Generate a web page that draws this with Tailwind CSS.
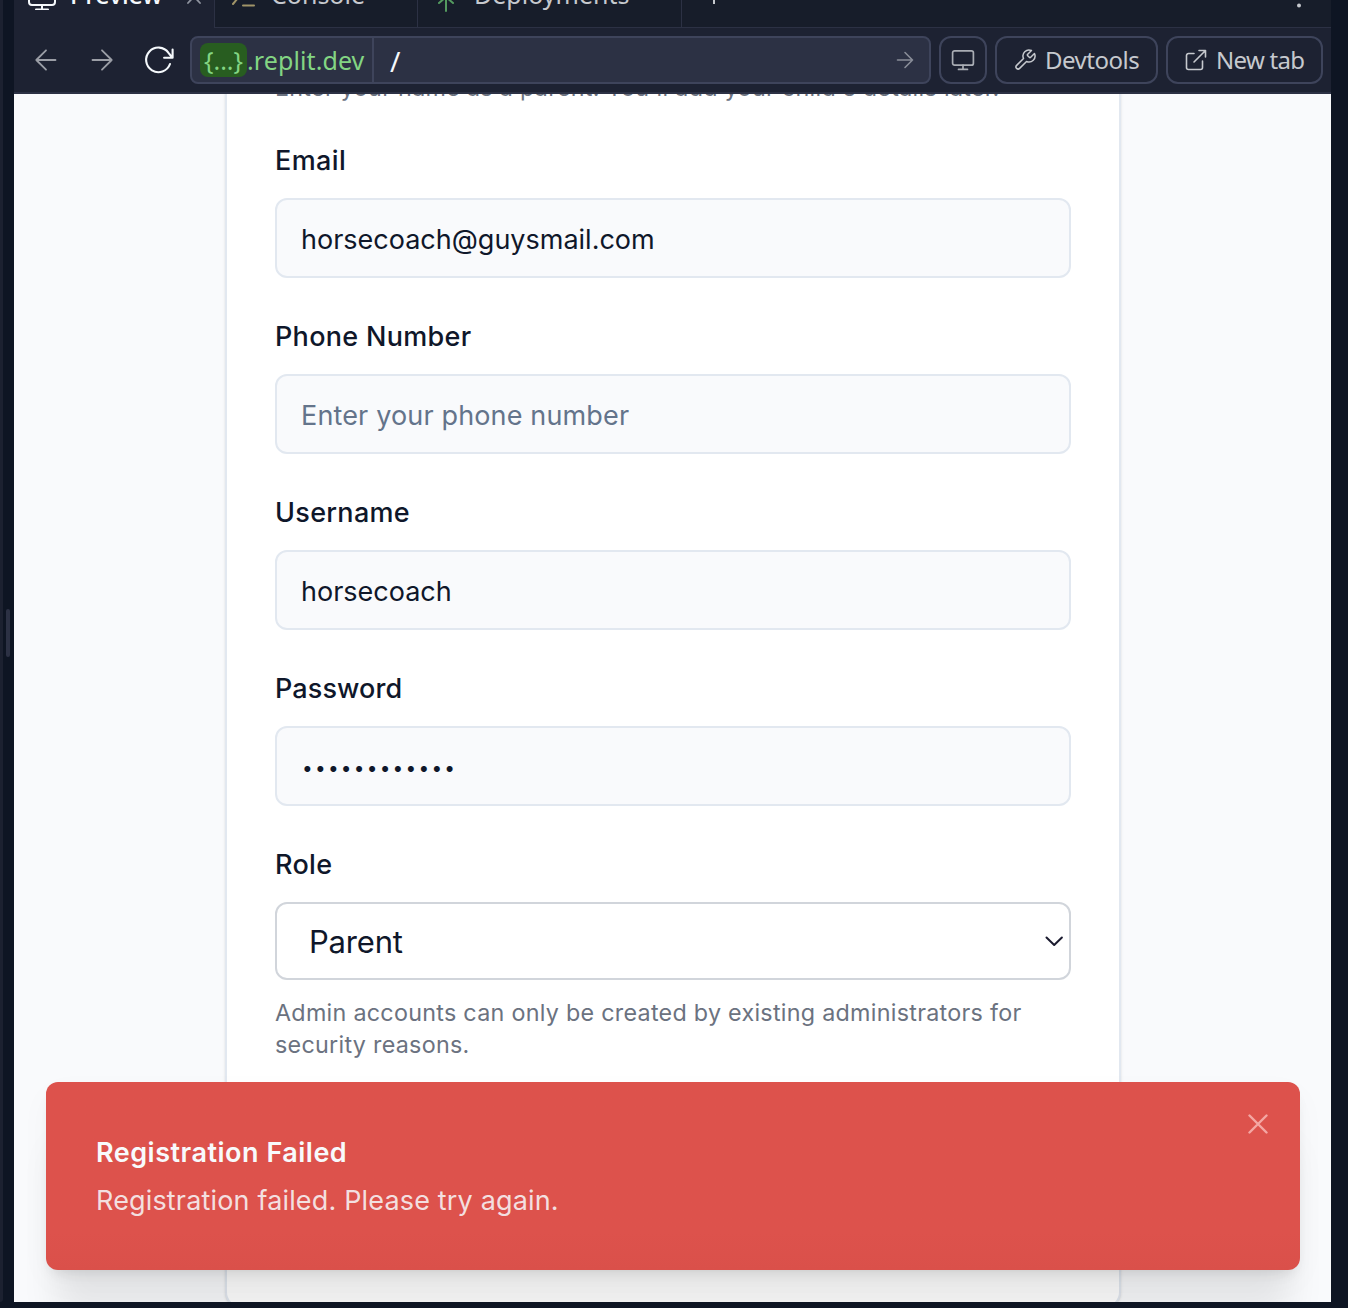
<!DOCTYPE html>
<html lang="en">
<head>
<meta charset="utf-8">
<title>Preview</title>
<script src="https://cdn.jsdelivr.net/npm/@tailwindcss/browser@4"></script>
</head>
<body class="h-[1308px] w-[1348px] overflow-hidden bg-[#0e1523] font-['Inter',sans-serif]">
<div class="flex h-full">
  <div class="h-[1302px] w-[3px] shrink-0 rounded-br-sm bg-[#1c2130]"></div>
  <div class="flex w-[11px] shrink-0 items-start pt-[609px] pl-[3px]">
    <div class="h-12 w-1 rounded-full bg-[#2c3144]"></div>
  </div>

  <main class="flex h-[1302px] w-[1317px] shrink-0 flex-col overflow-hidden bg-[#1d2232]">
    <!-- Tabs -->
    <div class="flex h-7 shrink-0 items-end text-[25px] leading-8 text-[#c6c9ce] font-['Noto_Sans',sans-serif]">
      <div class="flex h-12 w-[200px] shrink-0 items-start pl-3.5 text-[#f5f9fc]">
        <svg class="mt-0.5 h-7 w-7 shrink-0" viewBox="0 0 28 28" fill="none" stroke="currentColor" stroke-width="2" stroke-linecap="round"><rect x="1" y="4" width="26" height="19" rx="3"/><path d="M14 23v4.500M8 27.500h12"/></svg>
        <span class="-mt-0.5 ml-3.5 font-medium tracking-[-0.1px] whitespace-nowrap">Preview</span>
        <svg class="mt-2 ml-6 h-4 w-4 shrink-0 text-[#8f949f]" viewBox="0 0 16 16" fill="none" stroke="currentColor" stroke-width="1.800" stroke-linecap="round"><path d="M2 2l12 13M14 2L2 15"/></svg>
      </div>
      <div class="flex h-12 w-[204px] shrink-0 items-start border-x border-b border-[#2c3144] bg-[#171d2a] pl-4">
        <svg class="mt-1 h-6 w-7 shrink-0 text-[#a09468]" viewBox="0 0 28 24" fill="none" stroke="currentColor" stroke-width="2" stroke-linecap="round"><path d="M2 3l7 8.500L2 20M12 21.500h11"/></svg>
        <span class="-mt-0.5 ml-3 whitespace-nowrap">Console</span>
      </div>
      <div class="flex h-12 w-[264px] shrink-0 items-start border-r border-b border-[#2c3144] bg-[#171d2a] pl-4">
        <svg class="mt-1 h-7 w-6 shrink-0 text-[#549a5f]" viewBox="0 0 24 28" fill="none" stroke="currentColor" stroke-width="2" stroke-linecap="round"><path d="M12 12v15M5 19l7-6 7 6"/></svg>
        <span class="-mt-0.5 ml-4 whitespace-nowrap">Deployments</span>
      </div>
      <div class="flex h-12 flex-1 items-start justify-between border-b border-[#2c3144] bg-[#171d2a] pr-[30px] pl-[22px]">
        <svg class="mt-1 h-5 w-5" viewBox="0 0 20 20" fill="none" stroke="currentColor" stroke-width="2" stroke-linecap="round"><path d="M10 1v19M1 10h18"/></svg>
        <svg class="mt-1 h-6 w-1 shrink-0" viewBox="0 0 4 24" fill="currentColor"><circle cx="2" cy="4" r="2"/><circle cx="2" cy="13" r="2"/><circle cx="2" cy="21.500" r="2"/></svg>
      </div>
    </div>

    <!-- Browser toolbar -->
    <div class="flex h-[66px] shrink-0 items-start border-b-2 border-[#2c3144] pt-2 pl-5 text-[25px] font-['Noto_Sans',sans-serif]">
      <svg class="mt-3 h-6 w-6 text-[#9b9ea6]" viewBox="0 0 24 24" fill="none" stroke="currentColor" stroke-width="1.800" stroke-linecap="round" stroke-linejoin="round"><path d="M21.500 12H2.300M12 2.300L2.300 12l9.700 9.700"/></svg>
      <svg class="mt-3 ml-8 h-6 w-6 text-[#9b9ea6]" viewBox="0 0 24 24" fill="none" stroke="currentColor" stroke-width="1.800" stroke-linecap="round" stroke-linejoin="round"><path d="M2.500 12h19.200M12 2.300l9.700 9.700-9.700 9.700"/></svg>
      <svg class="mt-2 ml-[29px] h-8 w-8 text-[#f5f9fc]" viewBox="0 0 32 32" fill="none" stroke="currentColor" stroke-width="2.100" stroke-linecap="round" stroke-linejoin="round"><path d="M29.600 5.500v8.300h-8.500M29.200 13.500L25.500 8.800A12.300 12.300 0 1 0 27 20"/></svg>
      <div class="ml-[15px] flex h-12 w-[741px] items-center rounded-lg border-2 border-[#3e445b] bg-[#2c3144]">
        <div class="flex h-full w-[182px] items-center border-r-2 border-[#3e445b] pl-2 text-[#83d583]">
          <span class="flex h-[34px] w-[47px] items-center justify-center rounded-lg bg-[#285d20] pt-0.5">{...}</span>
          <span class="pt-0.5 tracking-[0.1px] whitespace-nowrap">.replit.dev</span>
        </div>
        <span class="ml-4 pt-0.5 text-[28px] text-[#f5f9fc]">/</span>
        <svg class="mr-[15px] ml-auto h-[18px] w-[18px] text-[#898d98]" viewBox="0 0 18 18" fill="none" stroke="currentColor" stroke-width="1.600" stroke-linecap="round" stroke-linejoin="round"><path d="M1.500 9h15M9 1.500L16.500 9 9 16.500"/></svg>
      </div>
      <div class="ml-2 flex h-12 w-12 items-center justify-center rounded-xl border-2 border-[#3e445b] text-[#a9adb4]">
        <svg class="h-6 w-6" viewBox="0 0 24 24" fill="none" stroke="currentColor" stroke-width="1.700" stroke-linecap="round"><rect x="1.600" y="2.800" width="20.800" height="14.400" rx="2"/><path d="M12 17.200v4M7.500 21.400h9"/></svg>
      </div>
      <div class="ml-2 flex h-12 w-[163px] items-center rounded-xl border-2 border-[#3e445b] pl-4 text-2xl tracking-[-0.5px] text-[#c6c9ce]">
        <svg class="h-6 w-6 shrink-0" viewBox="0 0 24 24" fill="none" stroke="currentColor" stroke-width="1.500" stroke-linecap="round" stroke-linejoin="round"><path d="M14.700 6.300a1 1 0 0 0 0 1.400l1.600 1.600a1 1 0 0 0 1.400 0l3.770-3.770a6 6 0 0 1-7.940 7.940l-6.910 6.910a2.120 2.120 0 0 1-3-3l6.910-6.910a6 6 0 0 1 7.940-7.940l-3.760 3.760z"/></svg>
        <span class="ml-2 whitespace-nowrap">Devtools</span>
      </div>
      <div class="ml-2 flex h-12 w-[157px] items-center rounded-xl border-2 border-[#3e445b] pl-4 text-2xl tracking-[-0.7px] text-[#c6c9ce]">
        <svg class="h-6 w-6 shrink-0" viewBox="0 0 24 24" fill="none" stroke="currentColor" stroke-width="1.600" stroke-linecap="round" stroke-linejoin="round"><path d="M15 2.500h6.500V9M21 3L10 14M18.500 13v6.500a2 2 0 0 1-2 2h-12a2 2 0 0 1-2-2v-12a2 2 0 0 1 2-2H10"/></svg>
        <span class="ml-2 whitespace-nowrap">New tab</span>
      </div>
    </div>

    <!-- Previewed page -->
    <div class="relative flex h-[1208px] shrink-0 items-start justify-center overflow-hidden bg-[#f9fafc]">
      <form class="-mt-[39px] ml-px h-[1253px] w-[896px] shrink-0 rounded-2xl border-2 border-[#e2e8f0] bg-white px-12 pt-[15px] shadow-sm">
        <p class="h-8 text-[23.3px] leading-8 tracking-[0.3px] whitespace-nowrap text-[#6b7280]">Enter your name as a parent. You'll add your child's details later.</p>
        <div class="mt-[43px] flex flex-col gap-[45px] text-[27px] text-[#0f172a]">
          <div class="flex flex-col gap-[23px]">
            <label class="h-7 leading-7 font-medium tracking-[0.4px]">Email</label>
            <div class="flex h-20 items-center rounded-xl border-2 border-[#e2e8f0] bg-[#f9fafc] px-6 pt-1">horsecoach@guysmail.com</div>
          </div>
          <div class="flex flex-col gap-[23px]">
            <label class="h-7 leading-7 font-medium tracking-[0.3px]">Phone Number</label>
            <div class="flex h-20 items-center rounded-xl border-2 border-[#e2e8f0] bg-[#f9fafc] px-6 pt-1 tracking-[0.15px] text-[#64748b]">Enter your phone number</div>
          </div>
          <div class="flex flex-col gap-[23px]">
            <label class="h-7 leading-7 font-medium tracking-[0.3px]">Username</label>
            <div class="flex h-20 items-center rounded-xl border-2 border-[#e2e8f0] bg-[#f9fafc] px-6 pt-1">horsecoach</div>
          </div>
          <div class="flex flex-col gap-[23px]">
            <label class="h-7 leading-7 font-medium tracking-[0.1px]">Password</label>
            <div class="flex h-20 items-center rounded-xl border-2 border-[#e2e8f0] bg-[#f9fafc] px-[25px] pt-1.5 text-[19px] tracking-[2.25px]">••••••••••••</div>
          </div>
          <div class="flex flex-col">
            <label class="h-7 leading-7 font-medium tracking-[0.3px]">Role</label>
            <div class="mt-[23px] flex h-[78px] items-center rounded-xl border-2 border-[#d1d5db] bg-white pr-[5px] pl-8 text-[31px]"><span class="pt-0.5 tracking-[-0.2px]">Parent</span>
              <svg class="ml-auto h-6 w-5" viewBox="0 0 20 24" fill="none" stroke="#1b1b2f" stroke-width="2" stroke-linecap="round" stroke-linejoin="round"><path d="M2.500 8.500l7.700 7.500 7.700-7.500"/></svg>
            </div>
            <p class="mt-[17px] text-[23.3px] leading-8 tracking-[0.28px] text-[#6b7280]">Admin accounts can only be created by existing administrators for<br>security reasons.</p>
          </div>
        </div>
      </form>

      <!-- Toast -->
      <div class="absolute top-[988px] left-8 h-[188px] w-[1254px] rounded-xl bg-[#dd524c] bg-linear-to-b from-[#dd524c] from-80% to-[#da504a] pt-[53px] pl-[50px] text-[27px] shadow-[0_56px_36px_-10px_rgba(0,0,0,0.08),0_8px_14px_-6px_rgba(0,0,0,0.12),0_12px_32px_rgba(0,0,0,0.03)]">
        <p class="leading-9 font-semibold tracking-[0.5px] text-[#f8fafc]">Registration Failed</p>
        <p class="mt-3 leading-9 tracking-[0.16px] text-[#f8fafc]/85">Registration failed. Please try again.</p>
        <svg class="absolute top-8 right-8 h-5 w-5" viewBox="0 0 20 20" fill="none" stroke="#f4a7a4" stroke-width="2.400" stroke-linecap="round"><path d="M1.500 1.500l17 17M18.500 1.500l-17 17"/></svg>
      </div>
    </div>
  </main>
</div>
</body>
</html>
